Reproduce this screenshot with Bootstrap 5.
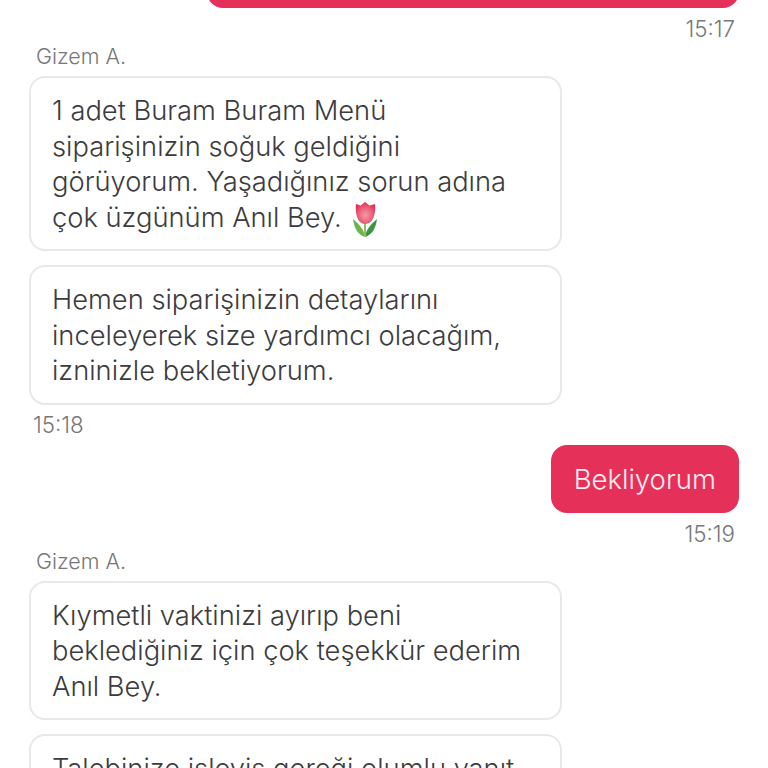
<!DOCTYPE html>
<html lang="tr">
<head>
    <meta charset="UTF-8">
    <title>Sohbet</title>
    <link href="https://cdn.jsdelivr.net/npm/bootstrap@5.3.0/dist/css/bootstrap.min.css" rel="stylesheet"/>
    <style>
        body { height: 768px; overflow: hidden; background: #fff; font-family: Inter, "Noto Sans", sans-serif; }
        .chat-wrap { padding: 0 29px; margin-top: -40px; }
        .msg-out { background: #e5315a; color: #fdeef1; border-radius: 16px; padding: 16px 23px; font-size: 27.500px; line-height: 36px; font-weight: 300; }
        .msg-top { width: 532px; height: 48px; }
        .msg-in { width: 533px; background: #fff; color: #3c3c3e; border: 2px solid #e8e8e8; border-radius: 16px; padding: 15px 21px 14px; font-size: 27.300px; line-height: 35.500px; font-weight: 300; margin-bottom: 14px; }
        .msg-time { color: #77777a; font-size: 22.300px; line-height: 24px; font-weight: 300; margin-top: 9px; }
        .msg-in.last-in { margin-bottom: 8px; }
        .msg-out.answer { margin-top: 8px; }
        .sender { color: #77777a; font-size: 21.500px; line-height: 24px; font-weight: 300; padding-left: 7px; margin-top: 3px; margin-bottom: 8px; }
        .tulip { width: 24px; height: 35px; vertical-align: -4px; margin: -10px 0 -6px 4px; }
    </style>
</head>
<body>

<div class="chat-wrap d-flex flex-column">
    <div class="msg-out msg-top align-self-end"></div>
    <div class="msg-time text-end pe-1">15:17</div>

    <div class="sender">Gizem A.</div>
    <div class="msg-in">1 adet Buram Buram Menü siparişinizin soğuk geldiğini görüyorum. Yaşadığınız sorun adına çok üzgünüm Anıl Bey.
        <svg class="tulip" viewBox="0 0 24 35">
            <defs>
                <radialGradient id="petal" cx="0.5" cy="0.6" r="0.6">
                    <stop offset="0" stop-color="#f59aa0"/>
                    <stop offset="0.6" stop-color="#e8607a"/>
                    <stop offset="1" stop-color="#df2f5a"/>
                </radialGradient>
            </defs>
            <path d="M12 35C11 28 7 23 0 17C1 26 5 33 12 35Z" fill="#6fb24a"/>
            <path d="M12 35C13 28 17 23 24 17C23 26 19 33 12 35Z" fill="#3f9440"/>
            <path d="M11 18h2v15h-2z" fill="#8cc063"/>
            <path d="M3 2L7.500 3.500L12 0L16.500 3.500L22 2C23 10 21 22 12 22C4 22 2 10 3 2Z" fill="url(#petal)"/>
        </svg>
    </div>
    <div class="msg-in last-in">Hemen siparişinizin detaylarını inceleyerek size yardımcı olacağım, izninizle bekletiyorum.</div>
    <div class="msg-time ps-1 mt-0">15:18</div>

    <div class="msg-out answer align-self-end">Bekliyorum</div>
    <div class="msg-time text-end pe-1">15:19</div>

    <div class="sender">Gizem A.</div>
    <div class="msg-in">Kıymetli vaktinizi ayırıp beni beklediğiniz için çok teşekkür ederim Anıl Bey.</div>
    <div class="msg-in">Talebinize işleyiş gereği olumlu yanıt</div>
</div>

<script src="https://cdn.jsdelivr.net/npm/bootstrap@5.3.0/dist/js/bootstrap.bundle.min.js"></script>
</body>
</html>
